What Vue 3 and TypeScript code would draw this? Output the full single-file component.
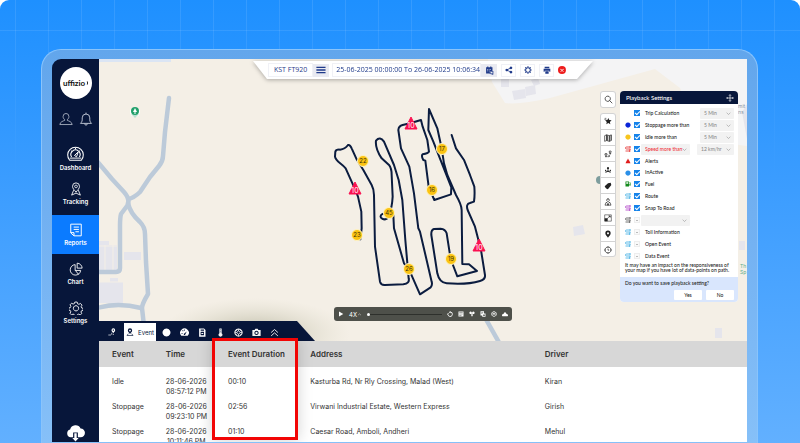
<script setup lang="ts">
import { h, ref, type FunctionalComponent } from 'vue'

type Shape = { d: string; fill?: boolean; w?: number }

const icons: Record<string, Shape[]> = {
  user: [{ d: 'M12 2.500a5.200 5.200 0 0 0-5 5.300c0 2.200 1 4 2.600 5v1.700c-2 .8-7.600 2-8.200 7h21.200c-.6-5-6.200-6.200-8.200-7v-1.700c1.600-1 2.600-2.800 2.600-5a5.200 5.200 0 0 0-5-5.300z', w: 1.3 }],
  bell: [{ d: 'M12 1v2.500M2.500 19.500h19c-1.500-1.500-3-3.200-3-6V10a6.500 6.500 0 0 0-13 0v3.500c0 2.800-1.500 4.500-3 6zM9.500 20c.3 3.300 4.700 3.300 5 0', w: 1.6 }],
  gauge: [
    { d: 'M3.800 21.500a11 11 0 1 1 16.400 0zM6.500 17a6.500 6.500 0 1 1 11 0', w: 1.5 },
    { d: 'M12 4v2M5.500 8l1.600 1.200M18.500 8l-1.600 1.200M10.500 14.800l5.300-5-2.300 6.800zM4 18.500h16', w: 1.4 }
  ],
  tracking: [
    { d: 'M12 17.500C9 13.500 6 11 6 7.500a6 6 0 0 1 12 0c0 3.500-3 6-6 10z', w: 1.5 },
    { d: 'M12 5.300a2.300 2.300 0 1 0 .01 0zM8 14l-3.500 8.500 7.500-3.500 7.500 3.500L16 14', w: 1.5 }
  ],
  report: [{ d: 'M5 2h16v20H8.500L3 17V2zM3 16.500h5.500V22M8 7h9M8 11h9M11 15h6', w: 1.7 }],
  chart: [{ d: 'M10.500 4.500a9 9 0 1 0 9.500 10h-9.500zM14 2v8.500h8.500A8.800 8.800 0 0 0 14 2zM11 14.500l5.500 7', w: 1.5 }],
  gear: [
    { d: 'M10 1.800h4l.8 3 2.200.9 2.700-1.500 2.600 2.900-1.500 2.600.8 2.100 2.600.8v3.500l-2.800.8-.9 2 1.400 2.600-2.800 2.400-2.400-1.400-2.300.9-.8 2.600h-3.800l-.8-2.700-2.100-.9-2.600 1.400-2.600-2.700 1.400-2.500-.8-2.200-2.800-.8v-3.600l2.800-.8.9-2.100-1.400-2.600 2.700-2.700 2.500 1.500 2.200-.9z', w: 1.5 },
    { d: 'M12 8a4.500 4.500 0 1 0 .01 0z', w: 1.5 }
  ],
  cloud: [
    { d: 'M6 18a5 5 0 0 1-.8-9.800A7 7 0 0 1 18.400 7a5.500 5.500 0 0 1 .1 11H15v-6H9v6z', fill: true },
    { d: 'M10.500 13h3v6h2.500l-4 4.500L8 19h2.500z', fill: true }
  ],
  menu: [{ d: 'M1 4h22v3.200H1zM1 10.400h22v3.200H1zM1 16.800h22V20H1z', fill: true }],
  calendar: [
    { d: 'M3 3h3V1h3v2h5V1h3v2h3v10h-7v7H3zM6 8v2h2V8zm4 0v2h2V8zm4 0v2h2V8zm-8 4v2h2v-2zm4 0v2h2v-2z', fill: true },
    { d: 'M15 14l7 1-2 6-7-1zM18 23l5-2', w: 2 }
  ],
  share: [
    { d: 'M18 1.500a4 4 0 1 1-.01 0zM5.500 8a4 4 0 1 1-.01 0zM18 14.500a4 4 0 1 1-.01 0z', fill: true },
    { d: 'M18 5.500L5.500 12 18 18.500', w: 2.4 }
  ],
  cog: [
    { d: 'M12 5a7 7 0 1 0 .01 0z', w: 3.2 },
    { d: 'M12 1v3M12 20v3M1 12h3M20 12h3M4 4l2.500 2.500M17.500 17.500L20 20M4 20l2.500-2.500M17.500 6.500L20 4', w: 3.6 }
  ],
  print: [{ d: 'M5 2h14v5H5zM2 8.500h20v9h-3V14H5v3.500H2zM7 15.500h10V23H7z', fill: true }],
  search: [{ d: 'M10 3a7 7 0 1 0 .01 0zM15.200 15.200L22 22', w: 2 }],
  star: [
    { d: 'M13 3l2.900 6.300 6.900.8-5.100 4.700 1.400 6.800-6.100-3.400-6.100 3.400 1.400-6.800-5.100-4.700 6.900-.8z', fill: true },
    { d: 'M1 7h6M2 4h5', w: 1.6 }
  ],
  map: [
    { d: 'M2 5l6-2.500v17L2 22zM16 5l6-2.500v17L16 22z', w: 2 },
    { d: 'M8 2.500l8 2.500v17l-8-2.500z', w: 2 },
    { d: 'M9 3.500l2 .8v16l-2-.8zM20 4l2-1v16l-2 1z', fill: true }
  ],
  routePins: [
    { d: 'M6 10.500a3 3 0 1 0 .01 0zM6 21.500l-2.500-4M6 21.500l2.500-4M18.500 3a2.800 2.800 0 1 0 .01 0zM18.500 13L16 8.500M18.500 13L21 8.500', w: 2.2 },
    { d: 'M10 20h5c3 0 3-4 0-4h-2', w: 2 }
  ],
  cluster: [
    { d: 'M12 3a3.300 3.300 0 1 1-.01 0zM10.500 9h3v5l7 4-1.500 2.500-7-3.500-7 3.500L3.500 18l7-4zM5 11a2 2 0 1 1-.01 0zM19 11a2 2 0 1 1-.01 0z', fill: true }
  ],
  tag: [{ d: 'M2 13L12 4l8-2 2 7-9 11-3 2-5-4zM5 20l3 2', fill: true }],
  agent: [
    { d: 'M12 2.500a4 4 0 1 0 .01 0zM3 21.500l3-8h3l3 4 3-4h3l3 8z', w: 2 },
    { d: 'M9 19h6v2.500H9zM8.500 3.500L12 1l3.500 2.500z', fill: true }
  ],
  expand: [
    { d: 'M2 2.500h20v19H2zM9.500 14L18 6.500M13 6h5.500v5', w: 1.6 },
    { d: 'M2 13h9v8.500H2zM14 5h5v5z', fill: true }
  ],
  pin: [{ d: 'M12 1.500a8 8 0 0 0-8 8c0 5 4.500 8 8 13.500 3.500-5.500 8-8.500 8-13.500a8 8 0 0 0-8-8zm0 5a3 3 0 1 1-.01 0z', fill: true }],
  compass: [
    { d: 'M12 3a9 9 0 1 0 .01 0z', w: 2.4 },
    { d: 'M12 8v4.500h3.500M12 1v3M12 20v3M1 12h3M20 12h3', w: 2 }
  ],
  move: [{ d: 'M12 2v20M2 12h20M9 5l3-3 3 3M9 19l3 3 3-3M5 9l-3 3 3 3M19 9l3 3-3 3', w: 2 }],
  dot: [{ d: 'M12 1.500a10.500 10.500 0 1 1-.01 0z', fill: true }],
  alert: [{ d: 'M12 2l4 8h1l5 11H2L7 10h1z', fill: true }],
  fuel: [
    { d: 'M2 2h14v20H2zM5 5v6h8V5z', fill: true },
    { d: 'M15 13h4v5q2.500 1 2.500-2V8L18 4', w: 2.5 }
  ],
  path: [{ d: 'M22 4H6Q2 4 2 8t4 4h16M2 20h18M18 1l4 3-4 3M17 17l4 3-4 3M20 12v5', w: 3 }],
  play: [{ d: 'M4 2l17 10L4 22z', fill: true }],
  replay: [
    { d: 'M5 8a9 9 0 1 0 8-4', w: 3.5 },
    { d: 'M14 0v9L7 4.500z', fill: true }
  ],
  listBox: [{ d: 'M2 2h20v20H2zM5 6v2h14V6zm0 5v2h14v-2zm0 5v2h9v-2z', fill: true }],
  heartPin: [{ d: 'M12 23l-5-9h10zM6.500 2a5 5 0 1 1-.01 0zM17.500 2a5 5 0 1 1-.01 0zM10 9h4v4h-4z', fill: true }],
  copy: [{ d: 'M2 1h14v9h6v13H9v-5H2zM5 5v2h8V5zm0 5v2h5v-2zm8 4v6h6v-6z', fill: true }],
  ball: [
    { d: 'M12 2.500a9.500 9.500 0 1 0 .01 0z', w: 3 },
    { d: 'M5 8l7 2 7-3M6 17l6-7 6 7', w: 3 }
  ],
  hill: [{ d: 'M8 9a4 4 0 1 1 8 0l3 3a5 5 0 0 1 3 9H2a5 5 0 0 1 3-9z', fill: true }],
  trail: [
    { d: 'M16 1a5.500 5.500 0 0 0-5.500 5.500c0 3 3 5 5.500 9 2.500-4 5.500-6 5.500-9A5.500 5.500 0 0 0 16 1zm0 3.500a2 2 0 1 1-.01 0z', fill: true },
    { d: 'M12 14l-2 6M1 21h8M14 19h4', w: 2 }
  ],
  eventPin: [
    { d: 'M12 1a6.500 6.500 0 0 0-6.500 6.500c0 4 4 6 6.500 11 2.500-5 6.500-7 6.500-11A6.500 6.500 0 0 0 12 1zm0 4a2.500 2.500 0 1 1-.01 0z', fill: true },
    { d: 'M7 17l-4 5.500h18L17 17', w: 2 }
  ],
  speed: [
    { d: 'M3.500 20.500a11.500 11.500 0 1 1 17 0zM11 18.500a2.500 2.500 0 0 0 3-1.500l4-8-6.500 5.500a2.500 2.500 0 0 0-.5 4zM4 13v2h3v-2zM11 4v3h2V4zM6 7l2 2 1.500-1.500-2-2z', fill: true }
  ],
  meter: [{ d: 'M3 1h13l4 4v18H3zM7 4v3h9V4zm0 6v9h9v-9zm2 3h5v3H9z', fill: true }],
  thermo: [{ d: 'M9 1h6v13a5 5 0 1 1-6 0zM11 4v2h2V4zm0 5v2h2V9z', fill: true }],
  tyre: [
    { d: 'M12 2.500a9.500 9.500 0 1 0 .01 0z', w: 3 },
    { d: 'M12 8a4 4 0 1 0 .01 0zM12 3v5M12 16v5M3 12h5M16 12h5M6 6l3 3M15 15l3 3M18 6l-3 3M6 18l3-3', w: 2 }
  ],
  camera: [{ d: 'M1 5h6l2-3h6l2 3h6v16H1zM12 7.500a5.500 5.500 0 1 0 .01 0zm0 2.500a3 3 0 1 1-.01 0z', fill: true }],
  up: [{ d: 'M3 12l9-8 9 8M3 21l9-8 9 8', w: 2.4 }],
  chevron: [{ d: 'M3 8l9 9 9-9', w: 3 }],
  caret: [{ d: 'M5 15l7-6 7 6', w: 2 }]
}

const Icon: FunctionalComponent<{ name: string }> = (props) =>
  h(
    'svg',
    { viewBox: '0 0 24 24', 'aria-hidden': 'true' },
    icons[props.name].map((s) =>
      h('path', {
        d: s.d,
        fill: s.fill ? 'currentColor' : 'none',
        'fill-rule': 'evenodd',
        stroke: s.fill ? 'none' : 'currentColor',
        'stroke-width': s.w ?? 0,
        'stroke-linejoin': 'round'
      })
    )
  )
Icon.props = ['name']

const primaryNav = [
  { label: 'Dashboard', icon: 'gauge', wide: true },
  { label: 'Tracking', icon: 'tracking', wide: false }
]
const secondaryNav = [
  { label: 'Reports', icon: 'report', active: true },
  { label: 'Chart', icon: 'chart', active: false },
  { label: 'Settings', icon: 'gear', active: false }
]

const mapTools = [
  ['star', 'Favourites'],
  ['map', 'Map type'],
  ['routePins', 'Directions'],
  ['cluster', 'Cluster'],
  ['tag', 'Labels'],
  ['agent', 'Street view'],
  ['expand', 'Full screen'],
  ['pin', 'Places'],
  ['compass', 'Recenter']
]

interface Setting {
  label: string
  icon: string
  tone: string
  on: boolean
  unit?: string
  picker?: boolean
}
const settings = ref<Setting[]>([
  { label: 'Trip Calculation', icon: '', tone: '', on: true, unit: '5 Min' },
  { label: 'Stoppage more than', icon: 'dot', tone: 'navy', on: true, unit: '5 Min' },
  { label: 'Idle more than', icon: 'dot', tone: 'amber', on: true, unit: '5 Min' },
  { label: 'Speed more than', icon: 'path', tone: 'red', on: true, unit: '12 km/hr', picker: true },
  { label: 'Alerts', icon: 'alert', tone: 'red', on: true },
  { label: 'InActive', icon: 'dot', tone: 'sky', on: true },
  { label: 'Fuel', icon: 'fuel', tone: 'green', on: true },
  { label: 'Route', icon: 'path', tone: 'cyan', on: true },
  { label: 'Snap To Road', icon: 'path', tone: 'purple', on: true },
  { label: '', icon: 'path', tone: 'dark', on: false, picker: true },
  { label: 'Toll Information', icon: 'path', tone: 'cyan', on: false },
  { label: 'Open Event', icon: 'path', tone: 'cyan', on: false },
  { label: 'Data Event', icon: 'path', tone: 'cyan', on: false }
])

const stops = [
  { n: 22, x: 363, y: 161 },
  { n: 45, x: 389, y: 213 },
  { n: 23, x: 357, y: 235 },
  { n: 26, x: 409, y: 269 },
  { n: 17, x: 442, y: 149 },
  { n: 16, x: 432, y: 190 },
  { n: 19, x: 451, y: 259 }
]
const alerts = [
  { n: 10, x: 411, y: 124 },
  { n: 10, x: 355, y: 189 },
  { n: 10, x: 479, y: 246 }
]

const playerTools = ['replay', 'listBox', 'heartPin', 'copy', 'ball', 'hill']
const tabTools = ['dot', 'speed', 'meter', 'thermo', 'tyre', 'camera', 'up']

const rows = [
  { event: 'Idle', date: '28-06-2026', time: '08:57:12 PM', duration: '00:10', address: 'Kasturba Rd, Nr Rly Crossing, Malad (West)', driver: 'Kiran' },
  { event: 'Stoppage', date: '28-06-2026', time: '09:23:10 PM', duration: '02:56', address: 'Virwani Industrial Estate, Western Express', driver: 'Girish' },
  { event: 'Stoppage', date: '28-06-2026', time: '10:11:46 PM', duration: '01:10', address: 'Caesar Road, Amboli, Andheri', driver: 'Mehul' }
]
</script>

<template>
  <div class="stage">
    <div class="frame">
      <div class="screen">
        <aside class="sidebar">
          <div class="logo">uffizio<span class="logo-mark"></span></div>
          <div class="account">
            <button aria-label="Account"><Icon name="user" class="i14" /></button>
            <button aria-label="Notifications"><Icon name="bell" class="i14" /></button>
          </div>
          <nav class="nav">
            <div class="group compact">
              <a v-for="n in primaryNav" :key="n.label" href="#" class="link">
                <Icon :name="n.icon" :class="n.wide ? 'i17' : 'i14'" />{{ n.label }}
              </a>
            </div>
            <div class="group">
              <a v-for="n in secondaryNav" :key="n.label" href="#" class="link" :class="{ active: n.active }">
                <Icon :name="n.icon" class="i14" />{{ n.label }}
              </a>
            </div>
          </nav>
          <button class="download" aria-label="Download"><Icon name="cloud" class="i19" /></button>
        </aside>

        <main class="content">
          <section class="map">
            <svg class="canvas" viewBox="99 59 648 282" preserveAspectRatio="xMidYMid slice">
              <defs>
                <radialGradient id="haze">
                  <stop offset="0" stop-color="#a9a890" stop-opacity=".8" />
                  <stop offset="1" stop-color="#d8d5c2" stop-opacity="0" />
                </radialGradient>
              </defs>
              <rect x="99" y="59" width="648" height="282" fill="#f4efe6" />
              <path d="M488 59L492 82L505 103Q520 105 550 98L655 69L680 88L700 140L747 146V59z" fill="#f4f4f5" />
              <path d="M99 59h72v3H99z" fill="#dbe5f4" />
              <g fill="#e5e5ec">
                <path d="M99 241h10v4h8v26H99zM124 252h17v8h-17zM110 278h8v4h5v21H99v-21h11z" />
                <path d="M501 79h8v8h-8zM512 91l13-2 1 9-12 2zM525 87l10-2 1 9-10 2zM531 80l7-2 2 6-6 2zM573 227l10-2 2 9-11 2zM715 328h7v10h-7zM739 241h6v9h-6zM742 112l5-8v35z" />
              </g>
              <g stroke="#f4efe6" fill="none"><path d="M105 245v26M113 245v26M99 246h18M99 282h24" /></g>
              <g fill="none" stroke="#bccad9" stroke-width="4.500" stroke-linecap="round" stroke-linejoin="round">
                <path d="M169 98L165 132L163 156Q163 161 159 166L150 177L140 192Q134 198 128 199" />
                <path d="M97 161L112 179L124 192Q131 200 127 206L121 214Q120 218 120 226V268Q120 272 116 272H97" />
                <path d="M128 203Q130 213 140 222Q145 227 145 234L146 262L148 294Q142 304 142 308L144 326" />
                <path d="M97 308Q118 302 141 308" />
                <path d="M483 314L501 346" />
              </g>
              <ellipse cx="255" cy="334" rx="95" ry="36" fill="url(#haze)" />
              <circle cx="600" cy="180" r="4" fill="#7d9d9d" />
              <circle cx="135" cy="112" r="5" fill="#fff" />
              <path d="M131 114l4 4 4-4z" fill="#b9dfcf" />
              <circle cx="135" cy="111" r="4" fill="#22a06b" />
              <path d="M135 108l2 4h-1.500v2h-1v-2h-1.500z" fill="#fff" />
              <g class="place">
                <text x="738" y="108">mit</text>
                <text x="738" y="114">ns</text>
                <text x="740" y="268" class="park">Th</text>
                <text x="740" y="274" class="park">Sp</text>
              </g>
              <g transform="translate(320 100) scale(.3333)" fill="none" stroke="#0b1c3f" stroke-width="6" stroke-linejoin="round" stroke-linecap="round">
                <path d="M121 418L125 385L124 335L114 290L104 265L77 205C65 190 47 185 45 170L46 155Q48 148 60 149Q75 147 84 135Q90 133 95 145L110 178L130 210L155 255Q162 268 162 285L165 440L180 545Q183 556 195 555L250 553Q270 550 266 535L256 420L247 300L236 240L222 195L192 125Q180 108 168 122Q165 145 185 175L207 195Q215 205 215 225L218 290Q216 325 208 338" />
                <path d="M192 340Q178 345 183 353Q190 362 202 355" />
                <path d="M220 345L222 385L252 490L266 506L300 583L332 562Q338 555 335 545L300 395L295 385L282 280L268 200L243 145L235 90Q236 78 248 75L270 70L303 60L308 80L322 120L327 155Q325 160 308 163Q303 167 310 180L316 182L326 260L343 300L393 283L394 262L340 125L325 90L327 27L352 85L365 145L372 190L382 225L408 285Q425 315 425 330L427 492L447 493L471 513L412 529L392 477L380 400Q376 387 362 386L342 387Q333 390 334 405L352 520Q358 548 380 550Q440 555 480 543Q497 538 495 525L483 450L465 380L443 330Q437 312 450 309L462 305Q465 285 463 260L450 225L432 180L408 145L395 105" />
              </g>
              <g v-for="s in stops" :key="s.n" class="stop">
                <circle :cx="s.x" :cy="s.y" r="5.500" />
                <text :x="s.x" :y="s.y + 2">{{ s.n }}</text>
              </g>
              <g v-for="a in alerts" :key="a.x" class="warn">
                <path :d="`M${a.x} ${a.y - 7}l6 12h-12z`" />
                <text :x="a.x" :y="a.y + 4">{{ a.n }}</text>
              </g>
            </svg>

            <div class="topbar-wrap">
              <div class="topbar">
                <span class="vehicle">KST FT920</span>
                <button class="shade menu" aria-label="Vehicle list"><Icon name="menu" class="i10" /></button>
                <span class="range">25-06-2025 00:00:00 To 26-06-2025 10:06:34</span>
                <button class="shade" aria-label="Pick dates"><Icon name="calendar" class="i9" /></button>
                <button class="tool" aria-label="Share"><Icon name="share" class="i8" /></button>
                <button class="tool" aria-label="Options"><Icon name="cog" class="i8" /></button>
                <button class="tool" aria-label="Print"><Icon name="print" class="i8" /></button>
                <button class="close" aria-label="Close">×</button>
              </div>
            </div>

            <div class="side">
              <div class="rail">
                <button class="rail-search" aria-label="Search"><Icon name="search" class="i9" /></button>
                <div class="rail-group">
                  <button v-for="t in mapTools" :key="t[0]" :aria-label="t[1]"><Icon :name="t[0]" class="i8" /></button>
                </div>
              </div>

              <section class="panel">
                <header>
                  <h2>Playback Settings</h2>
                  <Icon name="move" class="i8" />
                </header>
                <div class="settings">
                  <div v-for="(s, i) in settings" :key="i" class="setting" :class="s.tone">
                    <Icon v-if="s.icon" :name="s.icon" class="i6 tone" />
                    <i v-else></i>
                    <input :id="`opt${i}`" v-model="s.on" type="checkbox" :aria-label="s.label || 'Custom route'" />
                    <span v-if="s.picker" class="select kind">
                      <select :aria-label="s.label || 'Route type'"><option>{{ s.label }}</option></select>
                      <Icon name="chevron" class="chev" />
                    </span>
                    <label v-else :for="`opt${i}`">{{ s.label }}</label>
                    <span v-if="s.unit" class="select unit" :class="{ wide: s.picker }">
                      <select :aria-label="`${s.label} value`"><option>{{ s.unit }}</option></select>
                      <Icon name="chevron" class="chev" />
                    </span>
                  </div>
                </div>
                <p class="note">It may have an impact on the responsiveness of your map if you have lot of data-points on path.</p>
                <footer>
                  <p>Do you want to save playback setting?</p>
                  <div class="actions"><button>Yes</button><button>No</button></div>
                </footer>
              </section>
            </div>

            <div class="player">
              <button aria-label="Play"><Icon name="play" class="i6" /></button>
              <span class="rate">4X<Icon name="caret" class="i5" /></span>
              <input type="range" min="0" max="100" value="0" aria-label="Playback position" />
              <div class="player-tools">
                <button v-for="p in playerTools" :key="p" :aria-label="p"><Icon :name="p" class="i6" /></button>
              </div>
            </div>

            <div class="tabs">
              <button class="tab" aria-label="Trail"><Icon name="trail" class="i8" /></button>
              <button class="tab current"><Icon name="eventPin" class="i8" />Event</button>
              <button v-for="t in tabTools" :key="t" class="tab slim" :aria-label="t"><Icon :name="t" class="i9" /></button>
            </div>
          </section>

          <section class="events">
            <table>
              <thead>
                <tr>
                  <th class="c-event">Event</th>
                  <th class="c-time">Time</th>
                  <th class="c-duration">Event Duration</th>
                  <th class="c-address">Address</th>
                  <th>Driver</th>
                </tr>
              </thead>
              <tbody>
                <tr v-for="r in rows" :key="r.time">
                  <td>{{ r.event }}</td>
                  <td><span class="stamp">{{ r.date }}<br />{{ r.time }}</span></td>
                  <td>{{ r.duration }}</td>
                  <td>{{ r.address }}</td>
                  <td>{{ r.driver }}</td>
                </tr>
              </tbody>
            </table>
          </section>
          <div class="highlight"></div>
        </main>
      </div>
    </div>
  </div>
</template>

<style>
body {
  background: #fff;
}
</style>

<style scoped>
* {
  box-sizing: border-box;
}
button {
  display: flex;
  align-items: center;
  justify-content: center;
  padding: 0;
  border: 0;
  background: none;
  color: inherit;
  font: inherit;
}
svg {
  display: block;
  flex: none;
}
h2,
p {
  margin: 0;
}
.i5 { width: 5px; height: 5px; }
.i6 { width: 6px; height: 6px; }
.i8 { width: 8px; height: 8px; }
.i9 { width: 9px; height: 9px; }
.i10 { width: 10px; height: 10px; }
.i14 { width: 14px; height: 14px; }
.i17 { width: 17px; height: 17px; }
.i19 { width: 19px; height: 19px; }

.stage {
  display: flex;
  height: 100vh;
  padding: 49px 42px 0 41px;
  border-radius: 9px 9px 0 0;
  overflow: hidden;
  font-family: Inter, 'Liberation Sans', sans-serif;
  background:
    linear-gradient(rgba(30, 144, 255, 0), #3a9cff 40%, #62b0ff),
    repeating-linear-gradient(90deg, transparent 0 15px, rgba(255, 255, 255, 0.1) 15px 16px, transparent 16px 33px),
    linear-gradient(transparent 30px, rgba(255, 255, 255, 0.1) 30px 31px, transparent 31px),
    #1e90ff;
}
.frame {
  display: flex;
  flex: 1;
  min-width: 0;
  padding: 9px 10px 1px;
  border: 1px solid #8ac4fb;
  border-bottom: 0;
  border-radius: 20px 20px 0 0;
  background: linear-gradient(#62a6ec, #74b2f2 50%, #86c0f8);
}
.screen {
  display: flex;
  flex: 1;
  min-width: 0;
  border-radius: 9px 0 0 0;
  overflow: hidden;
}

.sidebar {
  display: flex;
  flex: 0 0 47px;
  flex-direction: column;
  align-items: center;
  padding-top: 8px;
  background: #07163a;
  color: #fff;
}
.logo {
  display: flex;
  align-items: center;
  justify-content: center;
  width: 32px;
  height: 32px;
  border-radius: 50%;
  background: #fff;
  color: #111;
  font: 700 8px/10px Lato, sans-serif;
}
.logo-mark {
  width: 3px;
  height: 4px;
  border-right: 1px solid #111;
  border-radius: 0 50% 50% 0;
}
.account {
  display: flex;
  gap: 6px;
  margin-top: 13px;
  color: #c4cad8;
}
.nav {
  display: flex;
  flex-direction: column;
  gap: 4px;
  align-self: stretch;
  margin-top: 17px;
}
.link {
  display: flex;
  flex-direction: column;
  align-items: center;
  justify-content: center;
  gap: 2px;
  height: 39px;
  color: #fff;
  font-size: 6px;
  font-weight: 600;
  line-height: 8px;
  text-decoration: none;
}
.compact .link {
  justify-content: flex-end;
  height: 34px;
  padding-bottom: 5px;
}
.active {
  background: #0b7bff;
}
.download {
  margin-top: auto;
}

.content {
  position: relative;
  display: flex;
  flex: 1;
  flex-direction: column;
  min-width: 0;
}
.map {
  position: relative;
  flex: 1;
  min-height: 0;
  overflow: hidden;
}
.canvas {
  position: absolute;
  inset: 0;
  width: 100%;
  height: 100%;
}
.place text {
  fill: #8d97a5;
  font-size: 5px;
}
.place .park {
  fill: #5fae8c;
}
.stop circle {
  fill: #fbc312;
  stroke: #fff3c4;
}
.stop text {
  fill: #3d3208;
  font-size: 6px;
  text-anchor: middle;
}
.warn path {
  fill: #fb1150;
  stroke: #fb1150;
  stroke-linejoin: round;
}
.warn text {
  fill: #fff;
  font-size: 7px;
  text-anchor: middle;
}

.topbar-wrap {
  position: absolute;
  top: 2px;
  left: 50%;
  filter: drop-shadow(0 1px 2px rgba(0, 0, 0, 0.3));
  transform: translateX(-50%);
}
.topbar {
  display: flex;
  align-items: center;
  height: 18px;
  padding: 0 27px 0 15px;
  background: #fff;
  clip-path: polygon(0 0, 100% 0, calc(100% - 16px) 100%, 14px 100%);
  color: #1f3a8a;
  font: 7px/12px 'Open Sans', sans-serif;
  white-space: nowrap;
}
.vehicle,
.range,
.tool {
  border: 1px solid #f0f1f6;
}
.vehicle {
  padding: 0 5px;
}
.range {
  padding: 0 0 0 3px;
  margin-left: 3px;
}
.shade {
  width: 16px;
  height: 13px;
  background: #e9eaf1;
}
.tool {
  width: 15px;
  height: 13px;
  margin-left: 4px;
}
.close {
  width: 8px;
  height: 8px;
  margin-left: 4px;
  border-radius: 50%;
  background: #ee1c1c;
  color: #fff;
  font-size: 8px;
  line-height: 8px;
}

.side {
  position: absolute;
  top: 32px;
  right: 9px;
  display: flex;
  align-items: flex-start;
  gap: 4px;
}
.rail {
  display: grid;
  gap: 5px;
  width: 16px;
  color: #222;
}
.rail-search,
.rail-group {
  border-radius: 3px;
  background: #fff;
  box-shadow: inset 0 0 0 1px #d3d3d3;
}
.rail-search {
  height: 17px;
}
.rail-group button {
  width: 100%;
  height: 16px;
}
.rail-group button + button {
  border-top: 1px solid #d3d3d3;
}
.panel {
  width: 118px;
  border-radius: 4px;
  overflow: hidden;
  background: #fff;
  color: #222;
  font-family: Lato, sans-serif;
  font-size: 5px;
  font-weight: 500;
  line-height: 5px;
}
.panel header {
  display: flex;
  align-items: center;
  justify-content: space-between;
  height: 13px;
  padding: 0 4px 0 6px;
  background: #07163a;
  color: #fff;
}
.panel h2 {
  font-size: 6px;
  font-weight: 500;
}
.settings {
  padding-top: 3px;
}
.setting {
  display: flex;
  align-items: center;
  height: 12px;
  padding: 0 4px 0 5px;
}
.setting.sky {
  height: 11px;
}
.setting i {
  width: 6px;
}
.setting input {
  width: 6px;
  height: 6px;
  margin: 0 5px 0 3px;
  border: 1px solid #eee;
  background: #fafafa;
  appearance: none;
}
.setting input::after {
  display: block;
  width: 2px;
  height: 1px;
  margin: 2px 1px;
  background: #bbb;
  content: '';
}
.setting input:checked {
  border-color: #1583ea;
  background: #1583ea;
}
.setting input:checked::after {
  width: 4px;
  height: 2px;
  margin: 0;
  border: solid #fff;
  border-width: 0 0 1px 1px;
  background: none;
  transform: rotate(-45deg);
}
.navy .tone { color: #0a25d8; }
.amber .tone { color: #f7c51e; }
.red .tone { color: #e01b1b; }
.sky .tone { color: #2a8fe8; }
.green .tone { color: #158a1e; }
.cyan .tone { color: #2fa6e0; }
.purple .tone { color: #a52bc0; }
.dark .tone { color: #444; }
.select {
  position: relative;
  display: flex;
  height: 11px;
}
.select select {
  width: 100%;
  padding: 0 4px;
  border: 0;
  border-radius: 1px;
  background: #f2f2f2;
  color: #888;
  font: inherit;
  appearance: none;
}
.chev {
  position: absolute;
  top: 3px;
  right: 3px;
  width: 5px;
  height: 5px;
  color: #999;
}
.kind {
  width: 49px;
  margin-left: -4px;
}
.red .kind select {
  color: #f0303a;
}
.unit {
  width: 34px;
  margin-left: auto;
}
.unit.wide {
  width: 37px;
}
.note {
  padding: 1px 4px 4px 5px;
}
.panel footer {
  display: grid;
  gap: 4px;
  padding: 4px 4px 2px 5px;
  background: #d9e6fd;
}
.actions {
  display: flex;
  justify-content: flex-end;
  gap: 4px;
}
.actions button {
  width: 28px;
  height: 10px;
  border-radius: 1px;
  background: #fff;
}

.player {
  position: absolute;
  bottom: 20px;
  left: 50%;
  display: flex;
  align-items: center;
  gap: 5px;
  width: 178px;
  height: 14px;
  padding: 0 4px;
  border-radius: 3px;
  background: #4e504a;
  color: #fff;
  font-size: 6px;
  transform: translateX(-50%);
}
.rate {
  display: flex;
  align-items: center;
}
.player input {
  flex: 1;
  min-width: 0;
  height: 3px;
  margin: 0;
  background: linear-gradient(#2e302c, #2e302c) center / 100% 1px no-repeat;
  appearance: none;
}
.player input::-webkit-slider-thumb {
  width: 3px;
  height: 3px;
  border-radius: 50%;
  background: #fff;
  appearance: none;
}
.player-tools {
  display: flex;
  gap: 5px;
}

.tabs {
  position: absolute;
  bottom: 0;
  left: 0;
  display: flex;
  align-items: flex-end;
  width: 216px;
  height: 20px;
  background: #07163a;
  clip-path: polygon(0 0, 198px 0, 100% 100%, 0 100%);
  color: #fff;
}
.tab {
  width: 25px;
  height: 18px;
}
.current {
  gap: 4px;
  width: 32px;
  margin-right: 1px;
  background: #fff;
  color: #07163a;
  font-size: 6px;
}
.slim {
  width: 18px;
}

.events {
  flex: 0 0 101px;
  overflow: hidden;
  background: #fff;
}
table {
  width: 100%;
  border-collapse: collapse;
  table-layout: fixed;
  color: #333;
  font-size: 7px;
  line-height: 10px;
}
th {
  height: 26px;
  padding: 0 0 0 13px;
  background: #d7d7d7;
  font-size: 8px;
  font-weight: 600;
  text-align: left;
}
.c-event { width: 8.3%; }
.c-time { width: 9.6%; }
.c-duration { width: 12.7%; }
.c-address { width: 36.2%; }
tbody::before {
  display: block;
  height: 7px;
  content: '';
}
td {
  height: 25px;
  padding: 3px 0 2px 13px;
  vertical-align: top;
  white-space: nowrap;
}
.stamp {
  display: inline-block;
  text-align: center;
}
.highlight {
  position: absolute;
  bottom: 2px;
  left: 113px;
  width: 86px;
  height: 102px;
  border: 3px solid #f20505;
  box-shadow: 0 0 14px rgba(0, 0, 0, 0.18);
}
</style>
